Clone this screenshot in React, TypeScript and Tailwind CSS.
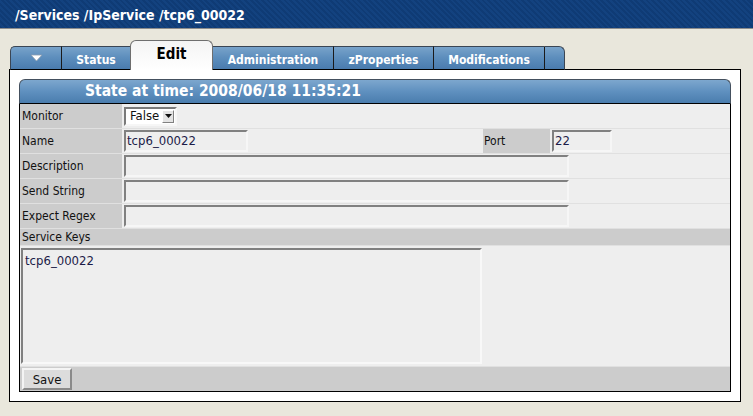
import React from 'react';

const ui = "font-['DejaVu_Sans_Condensed','DejaVu_Sans','Liberation_Sans',sans-serif]";

const inputBox =
  'h-[22px] bg-[#eeeeee] border-2 border-t-[#808080] border-l-[#808080] border-r-[#f6f6f6] border-b-[#f6f6f6] text-[13px] text-[#1c1c48] px-[1px] leading-[18px]';

function Label({ children }: { children: React.ReactNode }) {
  return (
    <div className="flex h-full w-[102px] shrink-0 items-center bg-[#cccccc] pl-[2px] text-[12px] text-[#111]">
      {children}
    </div>
  );
}

function FieldRow({ label, children }: { label: string; children?: React.ReactNode }) {
  return (
    <div className="flex h-[25px] border-b border-[#e0e0e0]">
      <Label>{label}</Label>
      <div className="flex flex-1 items-center bg-[#eeeeee] pl-[2px]">{children}</div>
    </div>
  );
}

function Tab({ label, className }: { label: string; className: string }) {
  return (
    <div
      className={`flex h-[24px] items-center justify-center border-t border-b border-t-[#3b4654] border-b-black bg-linear-to-b from-[#78a3ca] via-[#5c8dbc] to-[#4a7cae] pt-[3px] text-[12px] font-bold text-white ${className}`}
    >
      {label}
    </div>
  );
}

export default function App() {
  return (
    <div className={`h-[416px] w-[753px] overflow-hidden bg-[#e9e7dc] ${ui}`}>
      {/* title bar */}
      <div className="flex h-[29px] items-center border-b border-[#8c8c8c] bg-[repeating-linear-gradient(45deg,#0f3b75_0px,#0f3b75_2px,#13427f_2px,#13427f_4px)] pl-[15px] pt-[2px] text-[14px] font-bold text-white">
        /Services /IpService /tcp6_00022
      </div>

      {/* tabs */}
      <div className="relative z-10 mt-[11px] -mb-px ml-[10px] flex h-[30px] items-end">
        <Tab label="" className="w-[51px] rounded-tl-[5px] border-l border-l-[#3b4654]" />
        <div className="pointer-events-none absolute left-[20px] top-[14px]">
          <svg width="13" height="8" viewBox="0 0 13 8">
            <path d="M1 1 L12 1 L6.5 7 Z" fill="#ffffff" stroke="#8a9db0" strokeWidth="0.8" />
          </svg>
        </div>
        <Tab label="Status" className="w-[69px] border-l border-l-[#1a1a1a]" />
        <div className="flex h-[30px] w-[83px] items-center justify-center rounded-t-[6px] border border-b-0 border-[#6e6e6e] bg-linear-to-b from-[#f4f4f4] to-white pb-[2px] text-[15px] font-bold text-black">
          Edit
        </div>
        <Tab label="Administration" className="w-[120px]" />
        <Tab label="zProperties" className="w-[100px] border-l border-l-[#1a1a1a]" />
        <Tab label="Modifications" className="w-[111px] border-l border-l-[#1a1a1a]" />
        <Tab label="" className="w-[21px] rounded-tr-[6px] border-l border-r border-l-[#1a1a1a] border-r-[#3b4654]" />
      </div>

      {/* panel */}
      <div className="ml-[9px] h-[333px] w-[732px] border border-black bg-white p-[9px]">
        <div className="flex h-[313px] w-[712px] flex-col">
          <div className="flex h-[25px] shrink-0 items-center rounded-t-[6px] border border-[#44505e] border-b-black bg-linear-to-b from-[#7da7ce] via-[#5f90bf] to-[#4a7dae] pl-[65px] pt-[1px] text-[15.5px] font-bold text-white">
            State at time: 2008/06/18 11:35:21
          </div>

          <div className="flex flex-1 flex-col border-x border-b border-black bg-[#eeeeee]">
            <FieldRow label="Monitor">
              <div className="flex h-[19px] w-[53px] items-center border-2 border-t-[#7a7a7a] border-l-[#7a7a7a] border-r-[#f6f6f6] border-b-[#f6f6f6] bg-white pl-[4px] text-[13px] text-[#111]">
                <span className="flex-1">False</span>
                <span className="mr-[1px] flex h-[13px] w-[12px] items-center justify-center border border-t-white border-l-white border-r-[#808080] border-b-[#808080] bg-[#e4e4e4]">
                  <svg width="7" height="4" viewBox="0 0 7 4">
                    <path d="M0 0 L7 0 L3.5 4 Z" fill="#111" />
                  </svg>
                </span>
              </div>
            </FieldRow>

            <div className="flex h-[25px] border-b border-[#e0e0e0]">
              <Label>Name</Label>
              <div className="flex w-[361px] items-center bg-[#eeeeee] pl-[2px]">
                <div className={`w-[124px] ${inputBox}`}>tcp6_00022</div>
              </div>
              <div className="flex h-full w-[67px] items-center bg-[#cccccc] pl-[1px] text-[12px] text-[#111]">Port</div>
              <div className="flex flex-1 items-center bg-[#eeeeee] pl-[2px]">
                <div className={`w-[60px] ${inputBox}`}>22</div>
              </div>
            </div>

            <FieldRow label="Description">
              <div className={`w-[445px] ${inputBox}`} />
            </FieldRow>
            <FieldRow label="Send String">
              <div className={`w-[445px] ${inputBox}`} />
            </FieldRow>
            <FieldRow label="Expect Regex">
              <div className={`w-[445px] ${inputBox}`} />
            </FieldRow>

            <div className="flex h-[17px] items-center border-b border-[#e0e0e0] bg-[#cccccc] pl-[2px] text-[12px] text-[#111]">
              Service Keys
            </div>

            <div className="flex h-[120px] items-start bg-[#eeeeee] pl-[1px] pt-[2px]">
              <div className="h-[116px] w-[461px] border-2 border-t-[#808080] border-l-[#808080] border-r-[#f8f8f8] border-b-[#f8f8f8] px-[2px] pt-[1px] text-[13px] text-[#1c1c48]">
                tcp6_00022
              </div>
            </div>

            <div className="flex h-[25px] items-center border-t border-[#e0e0e0] bg-[#cccccc] pl-[2px]">
              <button className="h-[22px] w-[50px] border-2 border-t-[#f4f4f4] border-l-[#f4f4f4] border-r-[#8a8a8a] border-b-[#8a8a8a] bg-[#dcdcdc] text-[13px] text-[#111]">
                Save
              </button>
            </div>
          </div>
        </div>
      </div>
    </div>
  );
}
